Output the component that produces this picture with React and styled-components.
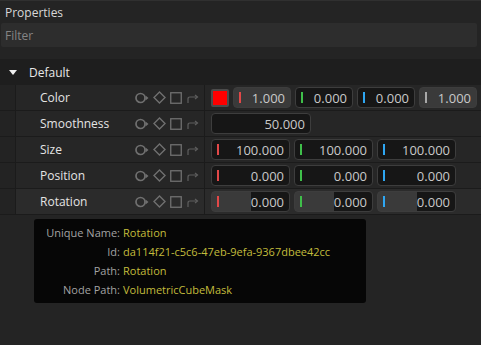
import { Fragment } from "react";
import styled, { createGlobalStyle } from "styled-components";

const GlobalStyle = createGlobalStyle`
  html, body {
    margin: 0;
    padding: 0;
    background: #242424;
  }
  body {
    font-family: "Open Sans", "Noto Sans", sans-serif;
    font-size: 12px;
    color: #dcdcdc;
  }
`;

const Panel = styled.div`
  position: relative;
  width: 481px;
  height: 345px;
  overflow: hidden;
  background: #242424;
  border-top: 1px solid #303030;
  box-sizing: border-box;
`;

const Title = styled.div`
  height: 22px;
  display: flex;
  align-items: center;
  padding-left: 5px;
  color: #d8d8d8;
`;

const Filter = styled.div`
  height: 24px;
  margin: 0 4px 12px 1px;
  background: #2d2d2d;
  border-radius: 2px;
  display: flex;
  align-items: center;
  padding-left: 4px;
  color: #858585;
`;

const GroupHeader = styled.div`
  height: 26px;
  display: flex;
  align-items: center;
  background: #1e1e1e;
  color: #e8e8e8;
`;

const Caret = styled.span`
  width: 0;
  height: 0;
  margin: 0 12px 0 9px;
  border-left: 4.5px solid transparent;
  border-right: 4.5px solid transparent;
  border-top: 5px solid #f0f0f0;
`;

const Row = styled.div`
  height: 26px;
  box-sizing: border-box;
  display: flex;
  border-bottom: 1px solid #1b1b1b;
  background: ${(p) => (p.$hover ? "#2b2b2b" : "#262626")};
`;

const Indent = styled.div`
  width: 15px;
  background: #232323;
  border-right: 1px solid #1b1b1b;
`;

const LabelCell = styled.div`
  width: 189px;
  box-sizing: border-box;
  display: flex;
  align-items: center;
  justify-content: space-between;
  padding: 0 5px 0 24px;
  border-right: 1px solid #1b1b1b;
  color: #e4e4e4;
`;

const Icons = styled.div`
  display: flex;
  align-items: center;
  gap: 4px;
`;

const ValueCell = styled.div`
  flex: 1;
  display: flex;
  align-items: center;
  gap: 4px;
  padding-left: 6px;
`;

const Swatch = styled.div`
  width: 14px;
  height: 14px;
  border: 2px solid #4c4c4c;
  border-radius: 2px;
  background: #ff0000;
`;

const Field = styled.div`
  position: relative;
  width: ${(p) => p.$w}px;
  height: 21px;
  box-sizing: border-box;
  border: 1px solid #3d3d3d;
  border-radius: 4px;
  display: flex;
  align-items: center;
  justify-content: flex-end;
  padding-right: 5px;
  font-size: 13px;
  color: #c9c9c9;
  background: ${(p) =>
    p.$fill > 0
      ? `linear-gradient(to right, #3a3a3a ${p.$fill}%, #161616 ${p.$fill}%)`
      : "#161616"};
`;

const Bar = styled.span`
  position: absolute;
  left: 5px;
  top: 4px;
  width: 2px;
  height: 11px;
  background: ${(p) => p.$c};
`;

const Tooltip = styled.div`
  position: absolute;
  left: 34px;
  top: 218px;
  width: 332px;
  box-sizing: border-box;
  padding: 4px 0 4px 9px;
  background: #060606;
  border-radius: 3px;
  display: grid;
  grid-template-columns: 77px 1fr;
  column-gap: 3px;
  font-size: 11px;
  line-height: 19px;
`;

const TipKey = styled.span`
  text-align: right;
  color: #a3a3a3;
`;

const TipValue = styled.span`
  color: #c3bc3c;
`;

const ICON = "#707070";

const KeyIcon = () => (
  <svg width="14" height="12" viewBox="0 0 14 12">
    <circle cx="5.5" cy="6" r="4.5" fill="none" stroke={ICON} strokeWidth="1.7" />
    <path d="M10.5 3.5 L13.5 6 L10.5 8.5 Z" fill={ICON} />
  </svg>
);

const DiamondIcon = () => (
  <svg width="13" height="13" viewBox="0 0 13 13">
    <path d="M6.5 1 L12 6.5 L6.5 12 L1 6.5 Z" fill="none" stroke={ICON} strokeWidth="1.4" />
  </svg>
);

const SquareIcon = () => (
  <svg width="12" height="12" viewBox="0 0 12 12">
    <rect x="0.75" y="0.75" width="10.5" height="10.5" fill="none" stroke={ICON} strokeWidth="1.3" />
  </svg>
);

const LinkIcon = () => (
  <svg width="13" height="12" viewBox="0 0 13 12">
    <path d="M2 11 V7 Q2 5 4 5 H11" fill="none" stroke="#5e5e5e" strokeWidth="1.2" />
    <path d="M9 3 L11.5 5 L9 7" fill="none" stroke="#5e5e5e" strokeWidth="1.2" />
  </svg>
);

const RED = "#e24848";
const GREEN = "#3fbf4a";
const BLUE = "#2ea6f2";
const GREY = "#a8a8a8";

const vec3 = (v, fill = 0) => [
  { c: RED, v, fill },
  { c: GREEN, v, fill },
  { c: BLUE, v, fill },
];

const properties = [
  {
    name: "Color",
    swatch: true,
    w: 58,
    fields: [
      { c: RED, v: "1.000", fill: 100 },
      { c: GREEN, v: "0.000" },
      { c: BLUE, v: "0.000" },
      { c: GREY, v: "1.000", fill: 100 },
    ],
  },
  { name: "Smoothness", w: 100, fields: [{ v: "50.000" }] },
  { name: "Size", w: 79, fields: vec3("100.000") },
  { name: "Position", w: 79, fields: vec3("0.000") },
  { name: "Rotation", w: 79, hover: true, fields: vec3("0.000", 51) },
];

const tip = [
  ["Unique Name:", "Rotation"],
  ["Id:", "da114f21-c5c6-47eb-9efa-9367dbee42cc"],
  ["Path:", "Rotation"],
  ["Node Path:", "VolumetricCubeMask"],
];

export default function App() {
  return (
    <>
      <GlobalStyle />
      <Panel>
        <Title>Properties</Title>
        <Filter>Filter</Filter>
        <GroupHeader>
          <Caret />
          Default
        </GroupHeader>
        {properties.map((p) => (
          <Row key={p.name} $hover={p.hover}>
            <Indent />
            <LabelCell>
              {p.name}
              <Icons>
                <KeyIcon />
                <DiamondIcon />
                <SquareIcon />
                <LinkIcon />
              </Icons>
            </LabelCell>
            <ValueCell>
              {p.swatch && <Swatch />}
              {p.fields.map((f, i) => (
                <Field key={i} $w={p.w} $fill={f.fill || 0}>
                  {f.c && <Bar $c={f.c} />}
                  {f.v}
                </Field>
              ))}
            </ValueCell>
          </Row>
        ))}
        <Tooltip>
          {tip.map(([k, v]) => (
            <Fragment key={k}>
              <TipKey>{k}</TipKey>
              <TipValue>{v}</TipValue>
            </Fragment>
          ))}
        </Tooltip>
      </Panel>
    </>
  );
}
